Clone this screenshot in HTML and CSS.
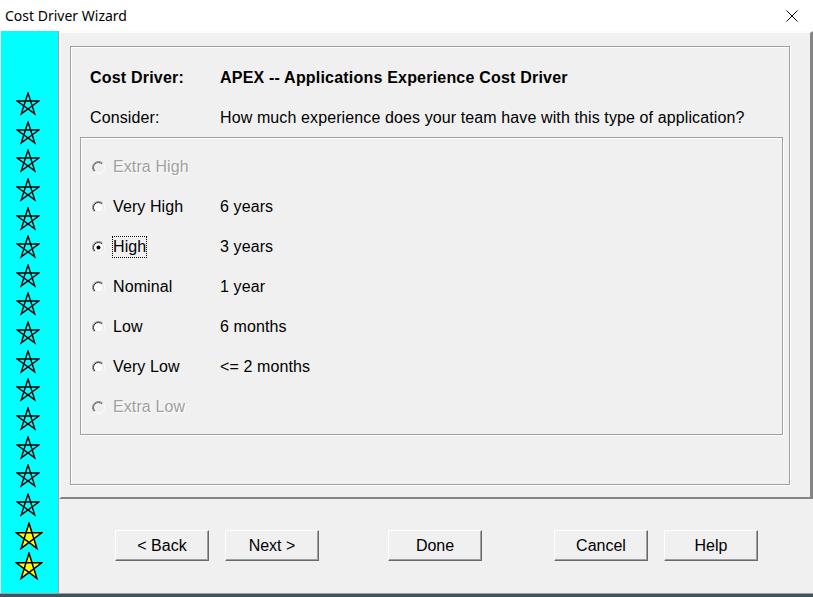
FILE: index.html
```html
<!DOCTYPE html>
<html>
<head>
<meta charset="utf-8">
<title>Cost Driver Wizard</title>
<link rel="stylesheet" href="styles.css">
</head>
<body>
<svg class="defs" aria-hidden="true">
  <symbol id="star" viewBox="0 0 24 24">
    <polygon points="12,1 18.76,21.8 1.06,8.95 22.94,8.95 5.24,21.8"/>
  </symbol>
</svg>
<div class="window">
  <div class="titlebar">
    <span class="title">Cost Driver Wizard</span>
    <svg class="close" viewBox="0 0 12 12"><path d="M0.5 0.5 L11.5 11.5 M11.5 0.5 L0.5 11.5" stroke="#000" stroke-width="1" fill="none"/></svg>
  </div>
  <div class="body">
    <div class="sidebar">
      <div class="star"><svg class="s-out" viewBox="0 0 24 24"><use href="#star"/></svg></div>
      <div class="star"><svg class="s-out" viewBox="0 0 24 24"><use href="#star"/></svg></div>
      <div class="star"><svg class="s-out" viewBox="0 0 24 24"><use href="#star"/></svg></div>
      <div class="star"><svg class="s-out" viewBox="0 0 24 24"><use href="#star"/></svg></div>
      <div class="star"><svg class="s-out" viewBox="0 0 24 24"><use href="#star"/></svg></div>
      <div class="star"><svg class="s-out" viewBox="0 0 24 24"><use href="#star"/></svg></div>
      <div class="star"><svg class="s-out" viewBox="0 0 24 24"><use href="#star"/></svg></div>
      <div class="star"><svg class="s-out" viewBox="0 0 24 24"><use href="#star"/></svg></div>
      <div class="star"><svg class="s-out" viewBox="0 0 24 24"><use href="#star"/></svg></div>
      <div class="star"><svg class="s-out" viewBox="0 0 24 24"><use href="#star"/></svg></div>
      <div class="star"><svg class="s-out" viewBox="0 0 24 24"><use href="#star"/></svg></div>
      <div class="star"><svg class="s-out" viewBox="0 0 24 24"><use href="#star"/></svg></div>
      <div class="star"><svg class="s-out" viewBox="0 0 24 24"><use href="#star"/></svg></div>
      <div class="star"><svg class="s-out" viewBox="0 0 24 24"><use href="#star"/></svg></div>
      <div class="star"><svg class="s-out" viewBox="0 0 24 24"><use href="#star"/></svg></div>
      <div class="star star-done"><svg class="s-done" viewBox="0 0 24 24" preserveAspectRatio="none"><use href="#star"/></svg></div>
      <div class="star star-done"><svg class="s-done" viewBox="0 0 24 24" preserveAspectRatio="none"><use href="#star"/></svg></div>
    </div>
    <div class="main">
      <div class="panel">
        <div class="group">
          <div class="info">
            <span class="bold">Cost Driver:</span>
            <span class="bold">APEX -- Applications Experience Cost Driver</span>
            <span>Consider:</span>
            <span>How much experience does your team have with this type of application?</span>
          </div>
          <div class="options">
            <div class="opt disabled">
              <svg class="radio" viewBox="0 0 13 13"><path d="M2.25 10.75 A6 6 0 0 1 10.75 2.25" fill="none" stroke="#8a8a8a"/><path d="M2.96 10.04 A5 5 0 0 1 10.04 2.96" fill="none" stroke="#5a5a5a"/><path d="M10.75 2.25 A6 6 0 0 1 2.25 10.75" fill="none" stroke="#fff"/></svg>
              <span class="opt-label">Extra High</span><span></span>
            </div>
            <div class="opt">
              <svg class="radio" viewBox="0 0 13 13"><circle cx="6.5" cy="6.5" r="5.2" fill="#fff"/><path d="M2.25 10.75 A6 6 0 0 1 10.75 2.25" fill="none" stroke="#8a8a8a"/><path d="M2.96 10.04 A5 5 0 0 1 10.04 2.96" fill="none" stroke="#2a2a2a"/><path d="M10.75 2.25 A6 6 0 0 1 2.25 10.75" fill="none" stroke="#fff"/><path d="M10.04 2.96 A5 5 0 0 1 2.96 10.04" fill="none" stroke="#dcdcdc"/></svg>
              <span class="opt-label">Very High</span><span>6 years</span>
            </div>
            <div class="opt">
              <svg class="radio" viewBox="0 0 13 13"><circle cx="6.5" cy="6.5" r="5.2" fill="#fff"/><path d="M2.25 10.75 A6 6 0 0 1 10.75 2.25" fill="none" stroke="#8a8a8a"/><path d="M2.96 10.04 A5 5 0 0 1 10.04 2.96" fill="none" stroke="#2a2a2a"/><path d="M10.75 2.25 A6 6 0 0 1 2.25 10.75" fill="none" stroke="#fff"/><path d="M10.04 2.96 A5 5 0 0 1 2.96 10.04" fill="none" stroke="#dcdcdc"/><circle cx="6.5" cy="6.5" r="2" fill="#000"/></svg>
              <span class="opt-label"><span class="focus">High</span></span><span>3 years</span>
            </div>
            <div class="opt">
              <svg class="radio" viewBox="0 0 13 13"><circle cx="6.5" cy="6.5" r="5.2" fill="#fff"/><path d="M2.25 10.75 A6 6 0 0 1 10.75 2.25" fill="none" stroke="#8a8a8a"/><path d="M2.96 10.04 A5 5 0 0 1 10.04 2.96" fill="none" stroke="#2a2a2a"/><path d="M10.75 2.25 A6 6 0 0 1 2.25 10.75" fill="none" stroke="#fff"/><path d="M10.04 2.96 A5 5 0 0 1 2.96 10.04" fill="none" stroke="#dcdcdc"/></svg>
              <span class="opt-label">Nominal</span><span>1 year</span>
            </div>
            <div class="opt">
              <svg class="radio" viewBox="0 0 13 13"><circle cx="6.5" cy="6.5" r="5.2" fill="#fff"/><path d="M2.25 10.75 A6 6 0 0 1 10.75 2.25" fill="none" stroke="#8a8a8a"/><path d="M2.96 10.04 A5 5 0 0 1 10.04 2.96" fill="none" stroke="#2a2a2a"/><path d="M10.75 2.25 A6 6 0 0 1 2.25 10.75" fill="none" stroke="#fff"/><path d="M10.04 2.96 A5 5 0 0 1 2.96 10.04" fill="none" stroke="#dcdcdc"/></svg>
              <span class="opt-label">Low</span><span>6 months</span>
            </div>
            <div class="opt">
              <svg class="radio" viewBox="0 0 13 13"><circle cx="6.5" cy="6.5" r="5.2" fill="#fff"/><path d="M2.25 10.75 A6 6 0 0 1 10.75 2.25" fill="none" stroke="#8a8a8a"/><path d="M2.96 10.04 A5 5 0 0 1 10.04 2.96" fill="none" stroke="#2a2a2a"/><path d="M10.75 2.25 A6 6 0 0 1 2.25 10.75" fill="none" stroke="#fff"/><path d="M10.04 2.96 A5 5 0 0 1 2.96 10.04" fill="none" stroke="#dcdcdc"/></svg>
              <span class="opt-label">Very Low</span><span>&lt;= 2 months</span>
            </div>
            <div class="opt disabled">
              <svg class="radio" viewBox="0 0 13 13"><path d="M2.25 10.75 A6 6 0 0 1 10.75 2.25" fill="none" stroke="#8a8a8a"/><path d="M2.96 10.04 A5 5 0 0 1 10.04 2.96" fill="none" stroke="#5a5a5a"/><path d="M10.75 2.25 A6 6 0 0 1 2.25 10.75" fill="none" stroke="#fff"/></svg>
              <span class="opt-label">Extra Low</span><span></span>
            </div>
          </div>
        </div>
      </div>
      <div class="buttons">
        <div class="btn-group">
          <button class="btn">&lt; Back</button>
          <button class="btn">Next &gt;</button>
        </div>
        <button class="btn btn-done">Done</button>
        <div class="btn-group btn-right">
          <button class="btn">Cancel</button>
          <button class="btn">Help</button>
        </div>
      </div>
    </div>
  </div>
  <div class="bottomline"></div>
</div>
</body>
</html>
```
FILE: styles.css
```css
* { box-sizing: border-box; }
html, body { margin: 0; padding: 0; }
body {
  width: 813px;
  height: 597px;
  overflow: hidden;
  background: #f0f0f0;
  font-family: "Liberation Sans", Arial, sans-serif;
  font-size: 16px;
  color: #000;
}
.defs { position: absolute; width: 0; height: 0; overflow: hidden; }

.window { display: flex; flex-direction: column; height: 597px; }

.titlebar {
  height: 31px;
  background: #fff;
  display: flex;
  align-items: center;
  justify-content: space-between;
  padding: 0 15px 0 5px;
}
.title {
  font-family: "Noto Sans", "Segoe UI", sans-serif;
  font-size: 14px;
  color: #000;
}
.close { width: 12px; height: 12px; display: block; }

.body { display: flex; height: 562px; }

.sidebar {
  width: 59px;
  flex: none;
  background: #00ffff;
  border-left: 1px solid #f4f4f4;
  border-right: 1px solid #a0a0a0;
  display: flex;
  flex-direction: column;
  padding: 61px 0 0 15px;
}
.star { height: 28.64px; flex: none; }
.star svg { display: block; }
.s-out { width: 24px; height: 24px; fill: none; stroke: #000; stroke-width: 1.4; }
.star-done { height: 29.4px; padding-top: 1px; }
.s-done { width: 28px; height: 29px; fill: #ffff00; stroke: #000; stroke-width: 1.3; margin-left: -1px; }

.main { flex: 1; display: flex; flex-direction: column; }

.panel {
  height: 468px;
  border-style: solid;
  border-width: 2px 3px 2px 2px;
  border-color: #fcfcfc #858585 #858585 #fcfcfc;
  padding: 13px 0 0 9px;
}
.group {
  width: 720px;
  height: 439px;
  border: 1px solid #a0a0a0;
  box-shadow: 1px 1px 0 #fff, inset 1px 1px 0 #fff;
  padding-top: 21px;
}
.info {
  display: grid;
  grid-template-columns: 130px auto;
  row-gap: 20px;
  line-height: 20px;
  padding-left: 19px;
  letter-spacing: 0.11px;
}
.bold { font-weight: bold; letter-spacing: 0.2px; }

.options {
  margin: 9px 0 0 9px;
  width: 703px;
  height: 298px;
  border: 1px solid #a0a0a0;
  box-shadow: 1px 1px 0 #fff, inset 1px 1px 0 #fff;
  padding: 9px 0 0 11px;
}
.opt { display: flex; align-items: center; height: 40px; line-height: 20px; letter-spacing: 0.1px; }
.radio { width: 13px; height: 13px; margin-right: 8px; flex: none; display: block; }
.opt-label { width: 107px; flex: none; }
.disabled { color: #a0a0a0; text-shadow: 1px 1px 0 #fff; }
.focus {
  display: inline-block;
  border: 1px dotted #000;
  margin-left: -1px;
  line-height: 20px;
}

.buttons {
  height: 94px;
  padding: 31px 0 0 56px;
  display: flex;
  align-items: flex-start;
}
.btn-group { display: flex; gap: 16px; }
.btn {
  width: 94px;
  height: 31px;
  background: #f0f0f0;
  border: 1px solid;
  border-color: #fff #696969 #696969 #fff;
  box-shadow: inset -1px -1px 0 #a0a0a0;
  font-family: "Liberation Sans", Arial, sans-serif;
  font-size: 16px;
  color: #000;
  padding: 0;
  margin: 0;
}
.btn-done { margin-left: 69px; }
.btn-right { margin-left: 72px; }

.bottomline {
  height: 4px;
  border-top: 1px solid #a0a0a0;
  background: #3f555e;
}
```
